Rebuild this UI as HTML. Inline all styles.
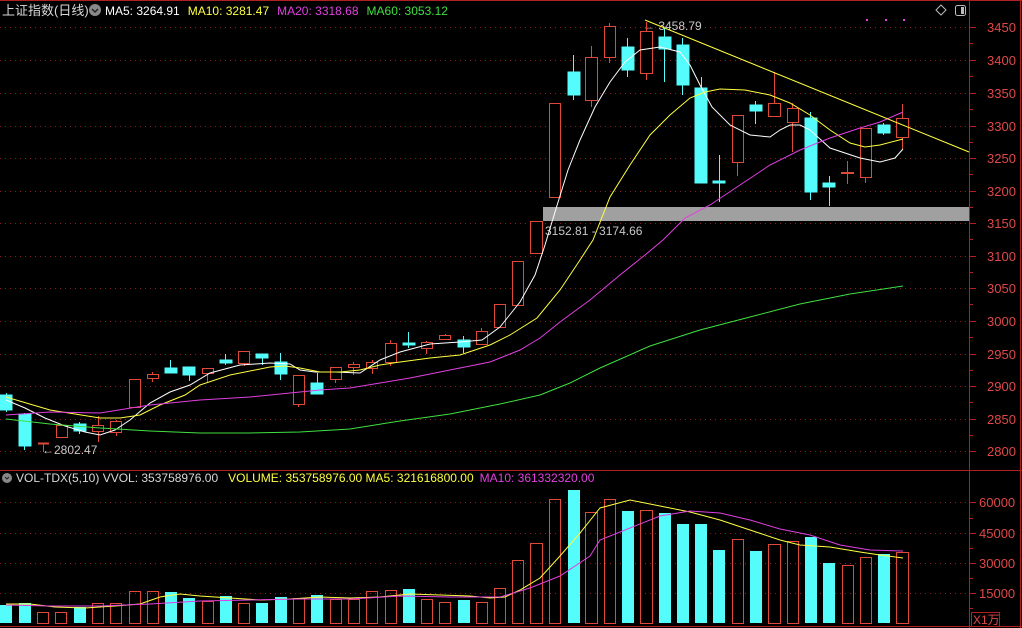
<!DOCTYPE html><html><head><meta charset="utf-8"><style>
html,body{margin:0;padding:0;background:#000;}
svg{display:block;font-family:"Liberation Sans","Noto Sans CJK SC",sans-serif;}
</style></head><body>
<svg width="1022" height="628" viewBox="0 0 1022 628" xmlns="http://www.w3.org/2000/svg">
<rect width="1022" height="628" fill="#000"/>
<line x1="0" y1="0.5" x2="1022" y2="0.5" stroke="#b02020"/>
<line x1="0" y1="470.5" x2="1022" y2="470.5" stroke="#b02020"/>
<line x1="0" y1="626.5" x2="1022" y2="626.5" stroke="#b02020"/>
<line x1="969.5" y1="0" x2="969.5" y2="628" stroke="#b02020"/>
<line x1="1020.5" y1="0" x2="1020.5" y2="628" stroke="#b02020"/>
<g stroke="#8a2020" stroke-dasharray="1 4">
<line x1="0" y1="27.5" x2="969" y2="27.5"/><line x1="0" y1="60.5" x2="969" y2="60.5"/><line x1="0" y1="93.5" x2="969" y2="93.5"/><line x1="0" y1="126.5" x2="969" y2="126.5"/><line x1="0" y1="158.5" x2="969" y2="158.5"/><line x1="0" y1="191.5" x2="969" y2="191.5"/><line x1="0" y1="223.5" x2="969" y2="223.5"/><line x1="0" y1="256.5" x2="969" y2="256.5"/><line x1="0" y1="288.5" x2="969" y2="288.5"/><line x1="0" y1="321.5" x2="969" y2="321.5"/><line x1="0" y1="354.5" x2="969" y2="354.5"/><line x1="0" y1="386.5" x2="969" y2="386.5"/><line x1="0" y1="419.5" x2="969" y2="419.5"/><line x1="0" y1="451.5" x2="969" y2="451.5"/>
<line x1="0" y1="502.5" x2="969" y2="502.5"/><line x1="0" y1="533.5" x2="969" y2="533.5"/><line x1="0" y1="563.5" x2="969" y2="563.5"/><line x1="0" y1="593.5" x2="969" y2="593.5"/>
</g>
<g stroke="#b02020">
<line x1="969" y1="27.5" x2="976" y2="27.5"/><line x1="969" y1="60.5" x2="976" y2="60.5"/><line x1="969" y1="93.5" x2="976" y2="93.5"/><line x1="969" y1="126.5" x2="976" y2="126.5"/><line x1="969" y1="158.5" x2="976" y2="158.5"/><line x1="969" y1="191.5" x2="976" y2="191.5"/><line x1="969" y1="223.5" x2="976" y2="223.5"/><line x1="969" y1="256.5" x2="976" y2="256.5"/><line x1="969" y1="288.5" x2="976" y2="288.5"/><line x1="969" y1="321.5" x2="976" y2="321.5"/><line x1="969" y1="354.5" x2="976" y2="354.5"/><line x1="969" y1="386.5" x2="976" y2="386.5"/><line x1="969" y1="419.5" x2="976" y2="419.5"/><line x1="969" y1="451.5" x2="976" y2="451.5"/>
<line x1="969" y1="43.5" x2="973" y2="43.5"/><line x1="969" y1="76.5" x2="973" y2="76.5"/><line x1="969" y1="109.5" x2="973" y2="109.5"/><line x1="969" y1="142.5" x2="973" y2="142.5"/><line x1="969" y1="174.5" x2="973" y2="174.5"/><line x1="969" y1="207.5" x2="973" y2="207.5"/><line x1="969" y1="239.5" x2="973" y2="239.5"/><line x1="969" y1="272.5" x2="973" y2="272.5"/><line x1="969" y1="304.5" x2="973" y2="304.5"/><line x1="969" y1="337.5" x2="973" y2="337.5"/><line x1="969" y1="370.5" x2="973" y2="370.5"/><line x1="969" y1="402.5" x2="973" y2="402.5"/><line x1="969" y1="435.5" x2="973" y2="435.5"/>
<line x1="969" y1="502.5" x2="976" y2="502.5"/><line x1="969" y1="533.5" x2="976" y2="533.5"/><line x1="969" y1="563.5" x2="976" y2="563.5"/><line x1="969" y1="593.5" x2="976" y2="593.5"/>
<line x1="969" y1="518.5" x2="973" y2="518.5"/><line x1="969" y1="548.5" x2="973" y2="548.5"/><line x1="969" y1="578.5" x2="973" y2="578.5"/><line x1="969" y1="608.5" x2="973" y2="608.5"/>
</g>
<g fill="#e04848" font-size="13">
<text x="987" y="32">3450</text><text x="987" y="65">3400</text><text x="987" y="98">3350</text><text x="987" y="131">3300</text><text x="987" y="163">3250</text><text x="987" y="196">3200</text><text x="987" y="228">3150</text><text x="987" y="261">3100</text><text x="987" y="293">3050</text><text x="987" y="326">3000</text><text x="987" y="359">2950</text><text x="987" y="391">2900</text><text x="987" y="424">2850</text><text x="987" y="456">2800</text>
<text x="979" y="507">60000</text><text x="979" y="538">45000</text><text x="979" y="568">30000</text><text x="979" y="598">15000</text>
</g>
<rect x="971.5" y="612.5" width="28" height="14" fill="none" stroke="#b02020"/>
<text x="973" y="624" fill="#e04848" font-size="12">X1万</text>

<!-- gray band -->
<rect x="543" y="207" width="426" height="14" fill="#a0a0a0"/>
<text x="545" y="235" fill="#c8c8c8" font-size="12">3152.81 - 3174.66</text>
<text x="643" y="30" fill="#c8c8c8" font-size="12">← 3458.79</text>
<text x="42" y="454" fill="#c8c8c8" font-size="12">←2802.47</text>

<!-- candles -->
<g stroke="#e04838" stroke-width="1" fill="#000">
<line x1="43.5" y1="443" x2="43.5" y2="452"/><line x1="38" y1="443.5" x2="49" y2="443.5" stroke-width="2"/>
<rect x="56.5" y="425.5" width="11" height="12"/>
<line x1="98.5" y1="416" x2="98.5" y2="442"/><rect x="92.5" y="425.5" width="11" height="6"/>
<line x1="116.5" y1="420" x2="116.5" y2="436"/><rect x="110.5" y="421.5" width="11" height="11"/>
<rect x="129.5" y="379.5" width="11" height="28"/>
<line x1="152.5" y1="372" x2="152.5" y2="382"/><rect x="147.5" y="374.5" width="11" height="4"/>
<line x1="207.5" y1="368" x2="207.5" y2="382"/><rect x="202.5" y="368.5" width="11" height="5"/>
<line x1="244.5" y1="351" x2="244.5" y2="366"/><rect x="238.5" y="351.5" width="11" height="12"/>
<line x1="298.5" y1="375" x2="298.5" y2="407"/><rect x="293.5" y="375.5" width="11" height="29"/>
<line x1="335.5" y1="367" x2="335.5" y2="383"/><rect x="330.5" y="367.5" width="11" height="12"/>
<line x1="353.5" y1="362" x2="353.5" y2="375"/><rect x="348.5" y="364.5" width="11" height="3"/>
<line x1="372.5" y1="360" x2="372.5" y2="374"/><rect x="366.5" y="362.5" width="11" height="6"/>
<line x1="390.5" y1="340" x2="390.5" y2="366"/><rect x="385.5" y="343.5" width="11" height="19"/>
<line x1="426.5" y1="341" x2="426.5" y2="354"/><rect x="421.5" y="342.5" width="11" height="6"/>
<line x1="445.5" y1="334" x2="445.5" y2="340"/><rect x="439.5" y="335.5" width="11" height="4"/>
<line x1="481.5" y1="328" x2="481.5" y2="345"/><rect x="476.5" y="331.5" width="11" height="13"/>
<rect x="494.5" y="304.5" width="11" height="23"/>
<rect x="512.5" y="261.5" width="11" height="44"/>
<rect x="530.5" y="221.5" width="12" height="32"/>
<rect x="549.5" y="103.5" width="11" height="94"/>
<line x1="591.5" y1="46" x2="591.5" y2="107"/><rect x="585.5" y="57.5" width="12" height="43"/>
<line x1="609.5" y1="23" x2="609.5" y2="63"/><rect x="604.5" y="26.5" width="11" height="31"/>
<line x1="646.5" y1="22" x2="646.5" y2="80"/><rect x="640.5" y="31.5" width="12" height="42"/>
<line x1="737.5" y1="115" x2="737.5" y2="176"/><rect x="732.5" y="115.5" width="11" height="47"/>
<line x1="774.5" y1="72" x2="774.5" y2="117"/><rect x="768.5" y="103.5" width="12" height="13"/>
<line x1="792.5" y1="103" x2="792.5" y2="152"/><rect x="787.5" y="108.5" width="11" height="14"/>
<line x1="847.5" y1="161" x2="847.5" y2="184"/><line x1="841" y1="173" x2="854" y2="173" stroke-width="2"/>
<line x1="865.5" y1="128" x2="865.5" y2="183"/><rect x="860.5" y="128.5" width="11" height="49"/>
<line x1="902.5" y1="104" x2="902.5" y2="149"/><rect x="896.5" y="118.5" width="12" height="19"/>
</g>
<g stroke="#54fcfc" fill="#54fcfc">
<line x1="6.5" y1="393" x2="6.5" y2="412"/><rect x="0" y="395" width="12" height="15"/>
<line x1="24.5" y1="413" x2="24.5" y2="450"/><rect x="19" y="414" width="12" height="32"/>
<line x1="79.5" y1="422" x2="79.5" y2="434"/><rect x="74" y="424" width="12" height="7"/>
<line x1="170.5" y1="360" x2="170.5" y2="373"/><rect x="165" y="368" width="12" height="5"/>
<line x1="189.5" y1="367" x2="189.5" y2="381"/><rect x="183" y="367" width="12" height="8"/>
<line x1="225.5" y1="354" x2="225.5" y2="365"/><rect x="220" y="360" width="12" height="3"/>
<line x1="262.5" y1="354" x2="262.5" y2="365"/><rect x="256" y="354" width="12" height="4"/>
<line x1="280.5" y1="353" x2="280.5" y2="380"/><rect x="275" y="362" width="12" height="12"/>
<line x1="317.5" y1="373" x2="317.5" y2="394"/><rect x="311" y="383" width="12" height="11"/>
<line x1="408.5" y1="332" x2="408.5" y2="348"/><rect x="403" y="343" width="12" height="2"/>
<line x1="463.5" y1="336" x2="463.5" y2="353"/><rect x="458" y="340" width="12" height="7"/>
<line x1="573.5" y1="55" x2="573.5" y2="100"/><rect x="568" y="72" width="12" height="23"/>
<line x1="627.5" y1="38" x2="627.5" y2="77"/><rect x="622" y="47" width="12" height="23"/>
<line x1="664.5" y1="28" x2="664.5" y2="82"/><rect x="659" y="37" width="12" height="12"/>
<line x1="682.5" y1="38" x2="682.5" y2="95"/><rect x="677" y="45" width="12" height="40"/>
<line x1="701.5" y1="77" x2="701.5" y2="183"/><rect x="695" y="88" width="12" height="95"/>
<line x1="719.5" y1="155" x2="719.5" y2="202"/><rect x="713" y="181" width="12" height="2"/>
<line x1="755.5" y1="101" x2="755.5" y2="124"/><rect x="750" y="105" width="12" height="6"/>
<line x1="810.5" y1="112" x2="810.5" y2="200"/><rect x="805" y="118" width="12" height="74"/>
<line x1="829.5" y1="176" x2="829.5" y2="206"/><rect x="823" y="183" width="12" height="4"/>
<line x1="883.5" y1="123" x2="883.5" y2="135"/><rect x="878" y="125" width="12" height="8"/>
</g>

<!-- MA lines -->
<g fill="none" stroke-width="1">
<polyline stroke="#ffffff" points="6,400 25,408 45,418 65,426 85,432 100,435 115,430 130,420 150,403 170,392 190,385 210,373 240,365 270,363 290,364 300,370 315,372 335,372 360,373 380,360 400,352 430,344 460,342 482,340 500,327 520,302 535,275 545,245 555,212 568,170 580,140 595,107 610,82 625,62 640,50 660,47 680,52 690,65 700,85 712,107 730,125 750,135 770,137 780,130 790,125 800,125 810,130 830,148 860,158 880,162 895,158 903,149"/>
<polyline stroke="#ffff40" points="6,397 50,410 100,418 120,418 140,415 160,405 185,395 200,385 230,375 270,367 285,366 300,368 320,372 340,372 360,370 380,365 400,362 430,358 460,355 490,345 510,335 537,318 560,290 580,260 593,240 610,197 630,165 650,135 670,115 690,98 705,92 720,89 745,90 770,95 790,103 810,115 830,130 850,143 865,147 880,145 903,139"/>
<polyline stroke="#e040e0" points="6,415 50,412 100,413 150,405 200,400 250,397 290,393 320,390 350,388 380,383 410,378 450,370 490,362 520,350 540,338 560,322 590,300 620,275 645,255 663,240 685,218 710,205 740,185 770,165 800,150 830,138 860,128 880,122 903,112"/>
<polyline stroke="#40e040" points="6,419 50,424 100,428 150,431 200,433 250,433 300,432 350,429 400,421 450,414 500,404 540,395 570,383 600,368 650,346 700,330 750,317 800,304 850,294 903,286"/>
<line x1="645" y1="20" x2="969" y2="152" stroke="#ffff40"/>
</g>

<!-- volume bars -->
<g stroke="#e04838" fill="none">
<rect x="37.5" y="612.5" width="11" height="11"/><rect x="55.5" y="612.5" width="11" height="11"/>
<rect x="92.5" y="603.5" width="11" height="20"/><rect x="110.5" y="603.5" width="11" height="20"/>
<rect x="129.5" y="591.5" width="11" height="32"/><rect x="147.5" y="591.5" width="11" height="32"/>
<rect x="202.5" y="601.5" width="11" height="22"/><rect x="238.5" y="603.5" width="11" height="20"/>
<rect x="293.5" y="598.5" width="11" height="25"/><rect x="330.5" y="599.5" width="11" height="24"/>
<rect x="348.5" y="599.5" width="11" height="24"/><rect x="366.5" y="591.5" width="11" height="32"/>
<rect x="385.5" y="590.5" width="11" height="33"/><rect x="421.5" y="599.5" width="11" height="24"/>
<rect x="439.5" y="602.5" width="11" height="21"/><rect x="476.5" y="602.5" width="11" height="21"/>
<rect x="494.5" y="588.5" width="11" height="35"/><rect x="512.5" y="560.5" width="11" height="63"/>
<rect x="530.5" y="543.5" width="12" height="80"/><rect x="549.5" y="499.5" width="11" height="124"/>
<rect x="585.5" y="512.5" width="12" height="111"/><rect x="604.5" y="499.5" width="11" height="124"/>
<rect x="640.5" y="510.5" width="12" height="113"/><rect x="732.5" y="539.5" width="11" height="84"/>
<rect x="768.5" y="544.5" width="12" height="79"/><rect x="787.5" y="541.5" width="11" height="82"/>
<rect x="842.5" y="565.5" width="11" height="58"/><rect x="860.5" y="557.5" width="11" height="66"/>
<rect x="896.5" y="552.5" width="12" height="71"/>
</g>
<g fill="#54fcfc">
<rect x="0" y="605" width="12" height="18"/><rect x="19" y="603" width="12" height="20"/>
<rect x="74" y="607" width="12" height="16"/><rect x="165" y="592" width="12" height="31"/>
<rect x="183" y="598" width="12" height="25"/><rect x="220" y="596" width="12" height="27"/>
<rect x="256" y="603" width="12" height="20"/><rect x="275" y="597" width="12" height="26"/>
<rect x="311" y="595" width="12" height="28"/><rect x="403" y="589" width="12" height="34"/>
<rect x="458" y="600" width="12" height="23"/><rect x="568" y="490" width="12" height="133"/>
<rect x="622" y="511" width="12" height="112"/><rect x="659" y="513" width="12" height="110"/>
<rect x="677" y="524" width="12" height="99"/><rect x="695" y="524" width="12" height="99"/>
<rect x="713" y="550" width="12" height="73"/><rect x="750" y="551" width="12" height="72"/>
<rect x="805" y="537" width="12" height="86"/><rect x="823" y="563" width="12" height="60"/>
<rect x="878" y="554" width="12" height="69"/>
</g>
<g fill="none">
<polyline stroke="#ffff40" points="6,604 30,604 55,607 85,608 115,606 140,604 160,597 180,594 200,596 230,598 260,600 290,599 320,597 350,598 380,597 410,594 440,595 470,596 490,598 505,597 520,590 540,578 560,556 580,533 600,508 630,500 660,506 690,512 720,520 750,530 780,540 800,545 830,547 860,552 880,555 903,558"/>
<polyline stroke="#e040e0" points="6,605 50,606 100,606 150,604 200,601 250,600 300,599 350,599 400,596 450,597 500,597 530,588 560,576 590,556 600,540 630,528 660,516 690,511 720,513 750,520 780,529 810,535 840,545 870,550 903,551"/>
</g>

<!-- header -->
<text x="2" y="15" fill="#d8d8d8" font-size="13">上证指数(日线)</text>
<circle cx="95" cy="10" r="6" fill="#888"/><path d="M92 9 L95 12 L98 9" stroke="#222" fill="none" stroke-width="1.5"/>
<text x="105" y="15" font-size="12"><tspan fill="#ffffff">MA5: 3264.91</tspan><tspan fill="#ffff40" dx="8">MA10: 3281.47</tspan><tspan fill="#e040e0" dx="8">MA20: 3318.68</tspan><tspan fill="#40e040" dx="8">MA60: 3053.12</tspan></text>
<path d="M941 5 L946 10 L941 15 L936 10 Z" fill="none" stroke="#bbb"/>
<rect x="955.5" y="5.5" width="10" height="10" rx="2" fill="none" stroke="#bbb"/><rect x="961" y="7" width="3" height="7" fill="#bbb"/>
<g fill="#e040e0"><rect x="866" y="19" width="2" height="2"/><rect x="885" y="19" width="2" height="2"/><rect x="903" y="19" width="2" height="2"/></g>

<circle cx="7" cy="478" r="5" fill="#888"/><path d="M5 477 L7 479 L9 477" stroke="#222" fill="none"/>
<text x="16" y="482" font-size="12"><tspan fill="#d8d8d8">VOL-TDX(5,10)  VVOL: 353758976.00</tspan><tspan fill="#ffff40" dx="10">VOLUME: 353758976.00  MA5: 321616800.00</tspan><tspan fill="#e040e0" dx="6">MA10: 361332320.00</tspan></text>
</svg>
</body></html>
